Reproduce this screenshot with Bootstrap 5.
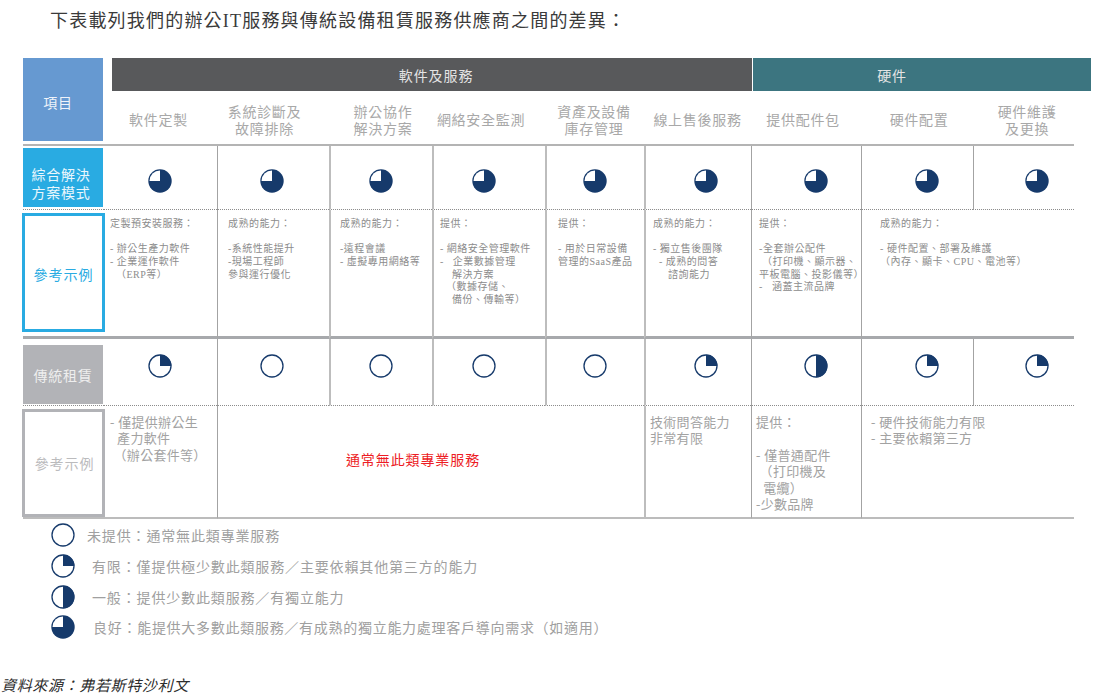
<!doctype html>
<html lang="zh-Hant"><head><meta charset="utf-8"><title>差異比較</title>
<link rel="stylesheet" href="https://cdn.jsdelivr.net/npm/bootstrap@5.3.0/dist/css/bootstrap.min.css">
<style>
body{margin:0;background:#fff;font-family:"Liberation Serif","Noto Sans CJK TC",serif;width:1096px;height:697px;overflow:hidden}
.doc-title{padding-left:50px;height:58px;line-height:42px;margin:0;font-size:18px;letter-spacing:1.2px;color:#3a3a3a;font-weight:400}
.cmptbl{table-layout:fixed;width:1068px;margin:0 0 0 23px;border-collapse:separate;border-spacing:0}
.cmptbl col:nth-child(1){width:81px}.cmptbl col:nth-child(2){width:113px}.cmptbl col:nth-child(3){width:112px}.cmptbl col:nth-child(4){width:103px}.cmptbl col:nth-child(5){width:113px}.cmptbl col:nth-child(6){width:99px}.cmptbl col:nth-child(7){width:107px}.cmptbl col:nth-child(8){width:110px}.cmptbl col:nth-child(9){width:112px}.cmptbl col:nth-child(10){width:101px}.cmptbl col:nth-child(11){width:17px}
.table.cmptbl>*>*>*{padding:0;border-bottom-width:0;box-shadow:none;background:transparent;vertical-align:top}
.table.cmptbl>tbody>tr>td.vl{border-left:1px solid #a3a3a3}
.table.cmptbl>tbody>tr>td.vl2{border-left:2px solid #bdbdbd}
.table.cmptbl>tbody>tr>td.ln-head{border-bottom:2px solid #b4b4b4;height:55px;vertical-align:middle;padding-top:6px}
.table.cmptbl>tbody>tr>td.ln-head-item{border-bottom:2px solid #b4b4b4}
.table.cmptbl>tbody>tr>td.ln-dash{border-bottom:1px dotted #8c8c8c}
.table.cmptbl>tbody>tr>td.ln-thick{border-bottom:3px solid #a7a9ac}
.table.cmptbl>tbody>tr>td.ln-end{border-bottom:2px solid #bcbcbc}
.h-bar{height:33px}.h-pie{height:64px}.h-ex{height:129px}.h-trad{height:67px}.h-ex2{height:113px}
.bar-txt{height:33px;color:#e4e4e4;font-size:14px;letter-spacing:.9px;display:flex;align-items:center;justify-content:center;padding-top:3px}
.bar-soft{background:#58595b;margin-left:8px;margin-right:-1px;padding-left:8px}
.bar-hard{background:#3c7580;margin-left:2px;padding-right:60px}
.lab{display:flex;align-items:center;justify-content:center;text-align:center;font-size:14px;letter-spacing:.7px;line-height:18px}
.lab-item{background:#6699d1;color:#eef3fa;height:83px;width:80px;padding-right:10px;padding-top:8px}
.lab-sol{background:#29abe2;color:#eaf7fd;height:59px;width:80px;margin-top:2px;padding-right:4px;padding-top:14px}
.lab-trad{background:#b2b3b7;color:#eeeeee;height:59px;width:80px;margin-top:6px;padding-top:4px}
.lab-ex1{border:3px solid #29abe2;color:#29abe2;height:119px;margin:3px -1px 0;width:83px;padding-top:6px;letter-spacing:1px}
.lab-ex2{border:3px solid #b2b3b7;color:#bbbbbd;height:108px;margin:3px -1px 0;width:83px;padding-left:2px;padding-top:3px;letter-spacing:.9px}
.col-h{font-size:14px;letter-spacing:.7px;line-height:17px;color:#a8a8a8;text-align:center;white-space:pre}
.pie{display:block;width:24px;height:24px}
.pie-cell{padding-top:23px}
.trad-cell{padding-top:15px}
.pie-wrap{display:flex;justify-content:center}
.sm-t{font-size:10px;letter-spacing:.5px;line-height:12.8px;color:#8c8c8c;white-space:pre;padding-top:7.5px}
.md-t{font-size:13px;letter-spacing:.3px;line-height:16.4px;color:#a2a2a2;white-space:pre;padding-top:9px}
.red-t{height:108px;display:flex;align-items:center;justify-content:center;color:#ed1c24;font-size:14px;letter-spacing:.9px;padding-right:36px}
.lg{margin:1px 0 0 51px}
.lg-row{height:30.67px;font-size:14px;letter-spacing:.85px;color:#a0a0a0}
.lg-row span{padding-top:3px}
.lg-t1{margin-left:12px}.lg-t2{margin-left:17px}.lg-t3{margin-left:18px;letter-spacing:.72px}
.src{margin:32px 0 0 1px;line-height:22px;font-size:15px;letter-spacing:.65px;font-style:italic;color:#2c2c2c}
.pl-1{padding-left:6px}.pl-2{padding-left:10px}.pl-3{padding-left:9px}.pl-4{padding-left:6px}.pl-5{padding-left:11px}.pl-6{padding-left:7px}.pl-7{padding-left:7px}.pl-8{padding-left:18px}
.mp-1{padding-left:6px}.mp-2{padding-left:4px}.mp-3{padding-left:4px}.mp-4{padding-left:9px}
tr.pies td:nth-child(2){padding-right:2px}tr.pies td:nth-child(3){padding-right:4px}
tr.pies td:nth-child(4){padding-right:2px}
tr.pies td:nth-child(5){padding-right:12px}tr.pies td:nth-child(6){padding-right:2px}
tr.pies td:nth-child(7){padding-left:14px}tr.pies td:nth-child(8){padding-left:18px}
tr.pies td:nth-child(9){padding-left:18px}tr.pies td:nth-child(10){padding-left:26px}
.ch-1{padding-right:4px}.ch-2{padding-right:17px}.ch-3{padding-left:5px}.ch-4{padding-right:15px}.ch-5{padding-right:1px}.ch-7{padding-right:6px}.ch-8{padding-left:4px}.ch-9{padding-left:7px}
</style></head><body>
<svg width="0" height="0" class="position-absolute"><defs>
<symbol id="p0" viewBox="0 0 24 24"><circle cx="12" cy="12" r="11" fill="#fff" stroke="#163a6b" stroke-width="1.3"/></symbol>
<symbol id="p1" viewBox="0 0 24 24"><circle cx="12" cy="12" r="11" fill="#fff" stroke="#163a6b" stroke-width="1.3"/><path d="M12 12V.7A11.3 11.3 0 0 1 23.3 12Z" fill="#163a6b"/></symbol>
<symbol id="p2" viewBox="0 0 24 24"><circle cx="12" cy="12" r="11" fill="#fff" stroke="#163a6b" stroke-width="1.3"/><path d="M12 .7A11.3 11.3 0 0 1 12 23.3Z" fill="#163a6b"/></symbol>
<symbol id="p3" viewBox="0 0 24 24"><circle cx="12" cy="12" r="11.7" fill="#163a6b"/><path d="M12 12H1.5A10.5 10.5 0 0 1 12 1.5Z" fill="#fff"/></symbol>
</defs></svg>

<h1 class="doc-title">下表載列我們的辦公IT服務與傳統設備租賃服務供應商之間的差異：</h1>

<table class="table cmptbl">
<colgroup><col><col><col><col><col><col><col><col><col><col><col></colgroup>
<tbody>
<tr class="h-bar">
<td rowspan="2" class="ln-head-item"><div class="lab lab-item">項目</div></td>
<td colspan="6"><div class="bar-txt bar-soft">軟件及服務</div></td>
<td colspan="4"><div class="bar-txt bar-hard">硬件</div></td>
</tr>
<tr>
<td class="ln-head"><div class="col-h ch-1">軟件定製</div></td>
<td class="ln-head"><div class="col-h ch-2">系統診斷及
故障排除</div></td>
<td class="ln-head"><div class="col-h ch-3">辦公協作
解決方案</div></td>
<td class="ln-head"><div class="col-h ch-4">網絡安全監測</div></td>
<td class="ln-head"><div class="col-h ch-5">資產及設備
庫存管理</div></td>
<td class="ln-head"><div class="col-h">線上售後服務</div></td>
<td class="ln-head"><div class="col-h ch-7">提供配件包</div></td>
<td class="ln-head"><div class="col-h ch-8">硬件配置</div></td>
<td class="ln-head"><div class="col-h ch-9">硬件維護
及更換</div></td>
<td></td>
</tr>
<tr class="h-pie pies">
<td class="ln-dash"><div class="lab lab-sol">綜合解決<br>方案模式</div></td>
<td class="ln-dash"><div class="pie-wrap pie-cell"><svg class="pie"><use href="#p3"/></svg></div></td>
<td class="ln-dash vl"><div class="pie-wrap pie-cell"><svg class="pie"><use href="#p3"/></svg></div></td>
<td class="ln-dash vl2"><div class="pie-wrap pie-cell"><svg class="pie"><use href="#p3"/></svg></div></td>
<td class="ln-dash vl2"><div class="pie-wrap pie-cell"><svg class="pie"><use href="#p3"/></svg></div></td>
<td class="ln-dash vl2"><div class="pie-wrap pie-cell"><svg class="pie"><use href="#p3"/></svg></div></td>
<td class="ln-dash vl2"><div class="pie-wrap pie-cell"><svg class="pie"><use href="#p3"/></svg></div></td>
<td class="ln-dash vl"><div class="pie-wrap pie-cell"><svg class="pie"><use href="#p3"/></svg></div></td>
<td class="ln-dash vl"><div class="pie-wrap pie-cell"><svg class="pie"><use href="#p3"/></svg></div></td>
<td class="ln-dash vl"><div class="pie-wrap pie-cell"><svg class="pie"><use href="#p3"/></svg></div></td>
<td></td>
</tr>
<tr class="h-ex">
<td class="ln-thick"><div class="lab lab-ex1">參考示例</div></td>
<td class="ln-thick"><div class="sm-t pl-1">定製預安裝服務：

- 辦公生產力軟件
- 企業運作軟件
  （ERP等）</div></td>
<td class="ln-thick vl"><div class="sm-t pl-2">成熟的能力：

-系統性能提升
-現場工程師
參與運行優化</div></td>
<td class="ln-thick vl2"><div class="sm-t pl-3">成熟的能力：

-遠程會議
- 虛擬專用網絡等</div></td>
<td class="ln-thick vl2"><div class="sm-t pl-4">提供：

- 網絡安全管理軟件
-   企業數據管理
    解決方案
  （數據存儲、
    備份、傳輸等）</div></td>
<td class="ln-thick vl2"><div class="sm-t pl-5">提供：

- 用於日常設備
管理的SaaS產品</div></td>
<td class="ln-thick vl2"><div class="sm-t pl-6">成熟的能力：

- 獨立售後團隊
  - 成熟的問答
     諮詢能力</div></td>
<td class="ln-thick vl"><div class="sm-t pl-7">提供：

-全套辦公配件
 （打印機、顯示器、
平板電腦、投影儀等）
-   涵蓋主流品牌</div></td>
<td colspan="2" class="ln-thick vl"><div class="sm-t pl-8">成熟的能力：

- 硬件配置、部署及維護
（內存、顯卡、CPU、電池等）</div></td>
<td></td>
</tr>
<tr class="h-trad pies">
<td class="ln-dash"><div class="lab lab-trad">傳統租賃</div></td>
<td class="ln-dash"><div class="pie-wrap trad-cell"><svg class="pie"><use href="#p1"/></svg></div></td>
<td class="ln-dash vl"><div class="pie-wrap trad-cell"><svg class="pie"><use href="#p0"/></svg></div></td>
<td class="ln-dash vl2"><div class="pie-wrap trad-cell"><svg class="pie"><use href="#p0"/></svg></div></td>
<td class="ln-dash vl2"><div class="pie-wrap trad-cell"><svg class="pie"><use href="#p0"/></svg></div></td>
<td class="ln-dash vl2"><div class="pie-wrap trad-cell"><svg class="pie"><use href="#p0"/></svg></div></td>
<td class="ln-dash vl2"><div class="pie-wrap trad-cell"><svg class="pie"><use href="#p1"/></svg></div></td>
<td class="ln-dash vl"><div class="pie-wrap trad-cell"><svg class="pie"><use href="#p2"/></svg></div></td>
<td class="ln-dash vl"><div class="pie-wrap trad-cell"><svg class="pie"><use href="#p1"/></svg></div></td>
<td class="ln-dash vl"><div class="pie-wrap trad-cell"><svg class="pie"><use href="#p1"/></svg></div></td>
<td></td>
</tr>
<tr class="h-ex2">
<td class="ln-end"><div class="lab lab-ex2">參考示例</div></td>
<td class="ln-end"><div class="md-t mp-1">- 僅提供辦公生
  產力軟件
 （辦公套件等）</div></td>
<td colspan="4" class="ln-end vl"><div class="red-t">通常無此類專業服務</div></td>
<td class="ln-end vl2"><div class="md-t mp-2">技術問答能力
非常有限</div></td>
<td class="ln-end vl"><div class="md-t mp-3">提供：

- 僅普通配件
 （打印機及
  電纜）
-少數品牌</div></td>
<td colspan="2" class="ln-end vl"><div class="md-t mp-4">- 硬件技術能力有限
- 主要依賴第三方</div></td>
<td></td>
</tr>
</tbody></table>

<div class="lg">
<div class="lg-row d-flex align-items-center"><svg class="pie"><use href="#p0"/></svg><span class="lg-t1">未提供：通常無此類專業服務</span></div>
<div class="lg-row d-flex align-items-center"><svg class="pie"><use href="#p1"/></svg><span class="lg-t2">有限：僅提供極少數此類服務／主要依賴其他第三方的能力</span></div>
<div class="lg-row d-flex align-items-center"><svg class="pie"><use href="#p2"/></svg><span class="lg-t2">一般：提供少數此類服務／有獨立能力</span></div>
<div class="lg-row d-flex align-items-center"><svg class="pie"><use href="#p3"/></svg><span class="lg-t3">良好：能提供大多數此類服務／有成熟的獨立能力處理客戶導向需求（如適用）</span></div>
</div>
<div class="src">資料來源：弗若斯特沙利文</div>
</body></html>
